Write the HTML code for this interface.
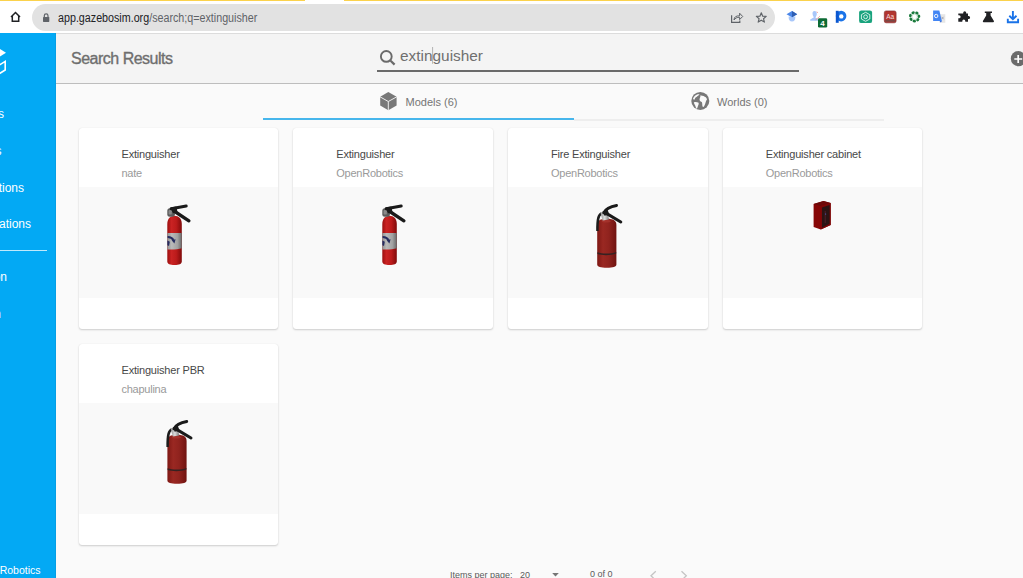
<!DOCTYPE html>
<html><head><meta charset="utf-8">
<style>
*{margin:0;padding:0;box-sizing:border-box}
html,body{width:1023px;height:578px;overflow:hidden;background:#fff;font-family:"Liberation Sans",sans-serif}
.abs{position:absolute}
#ybar{left:0;top:0;width:1023px;height:1px;background:#fbd24c}
#ygap{left:305px;top:0;width:39px;height:2px;background:#fff}
#toolbar{left:0;top:0;width:1023px;height:33px;background:#fff}
#pill{left:32px;top:4px;width:743px;height:27px;border-radius:14px;background:#e2e2e2}
#url{left:58.4px;top:8.5px;font-size:12px;line-height:18px;color:#5f6368;white-space:nowrap;transform:scaleX(0.893);transform-origin:0 0}
#url b{font-weight:normal;color:#202124}
#side{left:0;top:33px;width:56px;height:545px;background:#03a9f4;overflow:hidden}
#side .it{position:absolute;color:#fff;font-size:12px;white-space:nowrap}
#header{left:56px;top:33px;width:967px;height:51px;background:#f4f4f4;border-top:1px solid #dcdcdc;border-bottom:1px solid #bdbdbd}
#main{left:56px;top:84px;width:967px;height:494px;background:#fafafa}
#title{left:71px;top:49.5px;font-size:16px;color:#6e6e6e;letter-spacing:-0.5px;-webkit-text-stroke:0.35px #6e6e6e;white-space:nowrap}
#search{left:400px;top:47px;font-size:15.4px;color:#6f6f6f;white-space:nowrap}
#sline{left:377px;top:70px;width:422px;height:2px;background:#6a6a6a}
.tabtxt{position:absolute;font-size:11px;color:#757575;white-space:nowrap}
.card{position:absolute;width:199.5px;height:200.5px;background:#fff;border-radius:3px;box-shadow:0 1px 2px rgba(0,0,0,.18),0 0 1px rgba(0,0,0,.1);overflow:hidden}
.card .t{position:absolute;left:43px;top:19.8px;font-size:11px;color:#484848;white-space:nowrap;letter-spacing:-0.2px}
.card .s{position:absolute;left:43px;top:38.8px;font-size:11px;color:#9a9a9a;white-space:nowrap;letter-spacing:-0.25px}
.card .img{position:absolute;left:0;top:58.5px;width:100%;height:111.5px;background:#f9f9f9}
.pg{position:absolute;font-size:9px;color:#5a5a5a;white-space:nowrap}
</style></head><body>
<div id="toolbar" class="abs"></div>
<div id="ybar" class="abs"></div>
<div id="ygap" class="abs"></div>
<div id="pill" class="abs"></div>
<svg class="abs" style="left:0;top:0" width="1023" height="34" viewBox="0 0 1023 34">
 <!-- home -->
 <path d="M11 17 L15.5 12.5 L20 17 M12.3 16 V21.3 H18.7 V16" stroke="#202124" stroke-width="1.5" fill="none" stroke-linejoin="miter"/>
 <!-- lock -->
 <path d="M44.3 17.2 V15.8 A1.85 1.85 0 0 1 48 15.8 V17.2" stroke="#5f6368" stroke-width="1.2" fill="none"/>
 <rect x="43" y="17" width="6.3" height="4.9" rx="0.6" fill="#5f6368"/>
 <!-- share -->
 <path d="M731.6 15.2 V22.3 H739.8 V20.6" stroke="#5f6368" stroke-width="1.2" fill="none"/>
 <path d="M734 20 C734 16.8 736.5 15.6 739.6 15.9 V13.2 L742.7 16.5 L739.6 19.6 V17.3 C737 17.1 735.3 18.2 734 20 Z" stroke="#5f6368" stroke-width="1" fill="none" stroke-linejoin="round"/>
 <!-- star -->
 <path d="M761.3 12.8 L762.7 16.2 L766.2 16.4 L763.5 18.7 L764.4 22.1 L761.3 20.2 L758.2 22.1 L759.1 18.7 L756.4 16.4 L759.9 16.2 Z" stroke="#5f6368" stroke-width="1.15" fill="none" stroke-linejoin="round"/>
 <!-- grad cap -->
 <path d="M788.6 16.5 Q788.6 21.6 792 21.6 Q795.4 21.6 795.4 16.5 Z" fill="#a8c7fa"/>
 <path d="M786.5 14.2 L792 11.1 L797.2 14.2 L792 17.3 Z" fill="#4a86e8"/>
 <path d="M792 11.1 L797.2 14.2 L792 17.3 Z" fill="#2f5fb3"/>
 <!-- person -->
 <path d="M814.5 11 C812.8 11 812.3 12.6 812.6 14.3 C812.8 15.6 813.4 16.6 814 17.2 L810.2 19.4 V20.7 H818.2 V19.4 L815.3 17.3 C816.2 16.5 816.8 15.3 816.8 13.7 C816.8 12 816 11 814.5 11 Z" fill="#a8c7fa"/>
 <path d="M816.8 11.6 L817.8 13 M815.5 19.8 L818 18 L820 16" stroke="#f28b82" stroke-width="0.7" fill="none"/>
 <rect x="818" y="18.3" width="9.2" height="9.3" rx="1.3" fill="#0d6b35"/>
 <text x="822.6" y="26" font-family="Liberation Sans" font-weight="bold" font-size="8" fill="#fff" text-anchor="middle">4</text>
 <!-- P -->
 <circle cx="841.1" cy="16.1" r="5.3" fill="#1a73e8"/>
 <rect x="835.8" y="10.8" width="2.9" height="12" fill="#0b57d0"/>
 <circle cx="841.3" cy="16.4" r="2.2" fill="#fff"/>
 <!-- green gpt -->
 <rect x="859.1" y="10.4" width="13" height="12.7" rx="2.2" fill="#19a37d"/>
 <path d="M865.6 12.3 L869.8 14.7 V19 L865.6 21.3 L861.4 19 V14.7 Z" stroke="#fff" stroke-width="0.8" fill="none"/>
 <circle cx="865.6" cy="16.8" r="1.9" stroke="#fff" stroke-width="0.8" fill="none"/>
 <!-- red dict -->
 <rect x="884.3" y="10.9" width="11.8" height="11.9" rx="1.8" fill="#b2352f" stroke="#7d2a2a" stroke-width="0.6"/>
 <text x="890.2" y="19" font-family="Liberation Sans" font-size="6.5" fill="#f6dede" text-anchor="middle">Aa</text>
 <rect x="885.3" y="20.4" width="9.8" height="1" fill="#555"/>
 <!-- green flower -->
 <g fill="#1a7a3c" transform="translate(914.6 16.8)">
  <ellipse cx="0" cy="-4.35" rx="1.75" ry="1.4" transform="rotate(-20)"/>
  <ellipse cx="0" cy="-4.35" rx="1.75" ry="1.4" transform="rotate(31)"/>
  <ellipse cx="0" cy="-4.35" rx="1.75" ry="1.4" transform="rotate(82)"/>
  <ellipse cx="0" cy="-4.35" rx="1.75" ry="1.4" transform="rotate(133)"/>
  <ellipse cx="0" cy="-4.35" rx="1.75" ry="1.4" transform="rotate(184)"/>
  <ellipse cx="0" cy="-4.35" rx="1.75" ry="1.4" transform="rotate(235)"/>
  <ellipse cx="0" cy="-4.35" rx="1.75" ry="1.4" transform="rotate(286)"/>
  <circle r="2.7" fill="none" stroke="#a9d4b6" stroke-width="0.7"/>
 </g>
 <!-- translate -->
 <rect x="939.5" y="14.2" width="5.8" height="8.6" fill="#e6e6e6"/>
 <path d="M941.5 16.8 L943.6 19.2 M943.6 16.8 L941.5 19.2" stroke="#8a8a9a" stroke-width="0.6"/>
 <path d="M933.1 10.6 H939.3 L941.9 21 H933.1 Z" fill="#4285f4"/>
 <path d="M939.6 21 H941.9 L940.8 22.6 Z" fill="#3367d6"/>
 <circle cx="936.2" cy="16" r="1.7" stroke="#fff" stroke-width="0.9" fill="none"/>
 <!-- puzzle -->
 <path d="M961.2 13.6 H963.2 V12.8 A1.5 1.5 0 0 1 966.2 12.8 V13.6 H968 V16 H968.6 A1.5 1.5 0 0 1 968.6 19 H968 V21.7 H965.3 V21 A1.5 1.5 0 0 0 962.3 21 V21.7 H958.3 V18.3 H959.1 A1.5 1.5 0 0 0 959.1 15.3 H958.3 V13.6 Z" fill="#202124"/>
 <!-- flask -->
 <path d="M984.8 11.6 H992 V13 H990.6 V15.6 L993.9 21 Q994.3 22.2 993 22.2 H983.8 Q982.5 22.2 982.9 21 L986.2 15.6 V13 H984.8 Z" fill="#202124"/>
 <!-- download -->
 <path d="M1012.9 11.1 V19.2 M1009.3 15.8 L1012.9 19.3 L1016.5 15.8" stroke="#1a73e8" stroke-width="1.9" fill="none"/>
 <path d="M1007.8 18.8 V22.3 H1018.1 V18.8" stroke="#1a73e8" stroke-width="1.9" fill="none"/>
</svg>
<div id="url" class="abs"><b>app.gazebosim.org</b>/search;q=extinguisher</div>

<div id="header" class="abs"></div>
<div id="main" class="abs"></div>
<div id="side" class="abs">
  <div class="abs" style="left:55px;top:0;width:1px;height:545px;background:#069fe5"></div>
  <svg class="abs" style="left:0;top:0" width="56" height="60" viewBox="0 33 56 60"><path d="M-1 48.4 L6 52.7 L-1 57 Z" fill="#fff"/><path d="M-1 65.2 L5.2 61.4 V70 L-1 73.8" stroke="#fff" stroke-width="1.6" fill="none" stroke-linejoin="miter"/></svg>
  <div class="it" style="right:52px;top:74px">Models</div>
  <div class="it" style="right:54.5px;top:111px">Worlds</div>
  <div class="it" style="right:32px;top:147.5px">Collections</div>
  <div class="it" style="right:25px;top:183.5px">Applications</div>
  <div class="abs" style="left:0;top:217px;width:47px;height:1px;background:rgba(255,255,255,.75)"></div>
  <div class="it" style="right:49px;top:236.5px">Documentation</div>
  <div class="it" style="right:55px;top:273.5px">Sign in</div>
  <div class="it" style="right:15.5px;top:531px;font-size:10.5px">Open Robotics</div>
</div>

<svg class="abs" style="left:0;top:0" width="1023" height="140" viewBox="0 0 1023 140">
 <!-- search icon -->
 <circle cx="386.3" cy="56.4" r="5.4" stroke="#6a6a6a" stroke-width="1.9" fill="none"/>
 <path d="M390.6 60.7 L394.6 64.6" stroke="#6a6a6a" stroke-width="2.2" stroke-linecap="butt"/>
 <!-- cursor -->
 <rect x="432" y="47" width="1.1" height="16.8" fill="#b8b8b8"/>
 <!-- plus -->
 <circle cx="1018.4" cy="58.7" r="7.6" fill="#6b6b6b"/>
 <path d="M1014.3 59 H1022.2 M1018.2 55 V63" stroke="#fff" stroke-width="1.7"/>
 <!-- cube -->
 <path d="M388.3 92 L396.6 96.8 V105.5 L388.3 110.3 L380.2 105.5 V96.8 Z" fill="#787878"/>
 <path d="M380 96.8 L388.3 101.5 L396.8 96.8 M388.3 101.5 V110.6" stroke="#fafafa" stroke-width="0.9" fill="none"/>
 <!-- globe -->
 <circle cx="700.3" cy="100.9" r="9" fill="#787878"/>
 <g fill="#fafafa">
  <path d="M693 98.8 C693.6 97 695 95.2 697 94.4 C697.8 94.1 698.8 94.1 699.6 94.3 C699.2 95.1 698.4 95.5 697.6 95.9 C696.9 96.7 696 97.2 695.3 97.8 C694.9 98.5 694.8 99.2 694.4 99.8 C693.8 99.8 693.3 99.4 693 98.8 Z"/>
  <path d="M693.8 102.4 C695.2 101.8 697.2 102 698.6 102.8 C699 104 698.2 105.4 697.8 106.6 C697.5 107.5 697.3 108.3 696.8 109 C696 108 695.7 106.6 695.2 105.4 C694.6 104.4 694 103.5 693.8 102.4 Z"/>
  <path d="M701 95.4 C702.7 95.6 704.6 96.2 705.8 97.3 C706.4 98 706.8 98.8 707 99.5 C706.6 100 706 100.8 705.8 101.8 C705.4 103.4 704.8 105 704 106.6 C703.2 107.2 702.6 106.8 702.4 106 C702.2 104.6 702.4 103.2 701.8 102 C700.8 101.6 699.8 101 699.6 100 C699.4 98.8 700.2 97.6 700.4 96.6 C700.5 96 700.6 95.3 700.8 94.8 Z"/>
 </g>
</svg>
<div id="title" class="abs">Search Results</div>
<div id="search" class="abs">extinguisher</div>
<div id="sline" class="abs"></div>

<div class="abs" style="left:262.7px;top:118px;width:311.2px;height:2px;background:#47b6ec"></div>
<div class="abs" style="left:573.9px;top:119px;width:310.5px;height:2px;background:#eeeeee"></div>
<div class="tabtxt" style="left:405.5px;top:95.5px">Models (6)</div>
<div class="tabtxt" style="left:717px;top:95.5px">Worlds (0)</div>

<div class="card" style="left:78.5px;top:128.3px"><div class="t">Extinguisher</div><div class="s">nate</div><div class="img"></div></div>
<div class="card" style="left:293.3px;top:128.3px"><div class="t">Extinguisher</div><div class="s">OpenRobotics</div><div class="img"></div></div>
<div class="card" style="left:508px;top:128.3px"><div class="t">Fire Extinguisher</div><div class="s">OpenRobotics</div><div class="img"></div></div>
<div class="card" style="left:722.8px;top:128.3px"><div class="t">Extinguisher cabinet</div><div class="s">OpenRobotics</div><div class="img"></div></div>
<div class="card" style="left:78.5px;top:344px"><div class="t">Extinguisher PBR</div><div class="s">chapulina</div><div class="img"></div></div>

<svg class="abs" style="left:0;top:0" width="1023" height="578" viewBox="0 0 1023 578">
 <defs>
  <linearGradient id="redA" x1="0" x2="1" y1="0" y2="0">
   <stop offset="0" stop-color="#9c0f0f"/><stop offset="0.28" stop-color="#ca2323"/><stop offset="0.62" stop-color="#bb1b1b"/><stop offset="1" stop-color="#800a0a"/>
  </linearGradient>
  <linearGradient id="greyA" x1="0" x2="1" y1="0" y2="0">
   <stop offset="0" stop-color="#929292"/><stop offset="0.3" stop-color="#bababa"/><stop offset="0.7" stop-color="#a2a2a2"/><stop offset="1" stop-color="#686868"/>
  </linearGradient>
  <linearGradient id="redB" x1="0" x2="1" y1="0" y2="0">
   <stop offset="0" stop-color="#7e1814"/><stop offset="0.3" stop-color="#9a2822"/><stop offset="0.6" stop-color="#90231e"/><stop offset="1" stop-color="#701310"/>
  </linearGradient>
  <linearGradient id="silv" x1="0" x2="1" y1="0" y2="0">
   <stop offset="0" stop-color="#8a8a8a"/><stop offset="0.5" stop-color="#dedede"/><stop offset="1" stop-color="#7a7a7a"/>
  </linearGradient>
  <g id="extA">
   <path d="M167.3 224 C167.3 218.6 170.5 215.8 174.5 215.8 C178.5 215.8 181.8 218.6 181.8 224 V261.5 C181.8 264 179 265 174.5 265 C170 265 167.3 264 167.3 261.5 Z" fill="url(#redA)"/>
   <path d="M167.3 233.1 H181.8 V248.3 C178 249.6 171 249.8 167.3 249.4 Z" fill="url(#greyA)"/>
   <path d="M167.6 236.9 C170.4 236.8 172.4 238 173.4 240" stroke="#262c60" stroke-width="2" fill="none"/>
   <path d="M171.6 240.2 L175.6 239.2 L174.4 243.6 Z" fill="#262c60"/>
   <path d="M167.4 240.6 L169.8 241.8 L169 246 L167.4 245.2 Z" fill="#262c60"/>
   <rect x="167.3" y="208.3" width="7.6" height="8.4" rx="2.5" fill="#5c5c5c"/>
   <rect x="168.6" y="210" width="3.2" height="4.6" rx="1.2" fill="#8a8a8a"/>
   <path d="M171.2 208.8 L186.2 206.1" stroke="#1a1a1a" stroke-width="3" stroke-linecap="round"/>
   <path d="M174 211 L188.9 220.8" stroke="#1a1a1a" stroke-width="3.3" stroke-linecap="round"/>
   <path d="M170.5 207.5 L176.5 206.6 L177.5 212.6 L173 213.2 Z" fill="#1a1a1a"/>
  </g>
  <g id="extB">
   <path d="M597.2 225 C597.2 220.8 600 218.8 606.8 218.8 C613.6 218.8 616.4 220.8 616.4 225 V264.5 C616.4 266.6 613 267.8 606.8 267.8 C600.6 267.8 597.2 266.6 597.2 264.5 Z" fill="url(#redB)"/>
   <path d="M597.4 252.3 C602 254 611.5 254 616.2 252 V253.6 C611.5 255.6 602 255.6 597.4 254.1 Z" fill="#352222"/>
   <path d="M604 219.5 C609 219.5 611 220.6 610.5 222 C606 223 603 222.6 601.6 221.6 Z" fill="#b03a33" opacity="0.6"/>
   <path d="M601.6 213.4 C598.4 214.6 597.2 219 597.4 231" stroke="#1c1c1c" stroke-width="2.4" fill="none"/>
   <path d="M600.4 212.4 L607.3 211.4 L609 219.6 L602.6 220.4 Z" fill="url(#silv)"/>
   <path d="M603.6 212.8 Q606.5 207.4 616.6 205.5" stroke="#1a1a1a" stroke-width="2.8" stroke-linecap="round" fill="none"/>
   <path d="M606.8 213.6 L620.8 222" stroke="#1a1a1a" stroke-width="3" stroke-linecap="round"/>
   <path d="M602.5 211.5 L607.5 209.6 L609.3 214.6 L604.5 215.8 Z" fill="#1a1a1a"/>
  </g>
 </defs>
 <use href="#extA"/>
 <use href="#extA" transform="translate(215 0)"/>
 <use href="#extB"/>
 <use href="#extB" transform="translate(-429.8 216)"/>
 <!-- cabinet -->
 <path d="M813.6 203.9 L823.5 200.9 L830.7 202.9 V224.9 L820.8 229.6 L813.6 226.9 Z" fill="#860606"/>
 <path d="M813.6 203.9 L823.5 200.9 L830.7 202.9 L820.8 205.9 Z" fill="#6c0909"/>
 <path d="M820.8 205.9 L830.7 202.9 V224.9 L820.8 229.6 Z" fill="#7c0707"/>
 <path d="M822 207.4 L829.6 205 V223.8 L822 227.8 Z" fill="#2a1414"/>
 <path d="M825.2 211 V223" stroke="#5a2030" stroke-width="0.8"/>
 <circle cx="825.6" cy="214" r="0.6" fill="#4a6ad0"/>
</svg>
<div class="pg" style="left:450px;top:569.6px">Items per page:</div>
<div class="pg" style="left:520px;top:569.6px">20</div>
<div class="pg" style="left:590px;top:569.3px">0 of 0</div>
<svg class="abs" style="left:0;top:540px" width="1023" height="38" viewBox="0 540 1023 38">
 <path d="M552.2 573 H558.8 L555.5 576.4 Z" fill="#757575"/>
 <path d="M655.8 571.2 L651 575.8 L655.8 580.4" stroke="#c4c4c4" stroke-width="1.3" fill="none"/>
 <path d="M681.5 571.2 L686.3 575.8 L681.5 580.4" stroke="#c4c4c4" stroke-width="1.3" fill="none"/>
</svg>
</body></html>
